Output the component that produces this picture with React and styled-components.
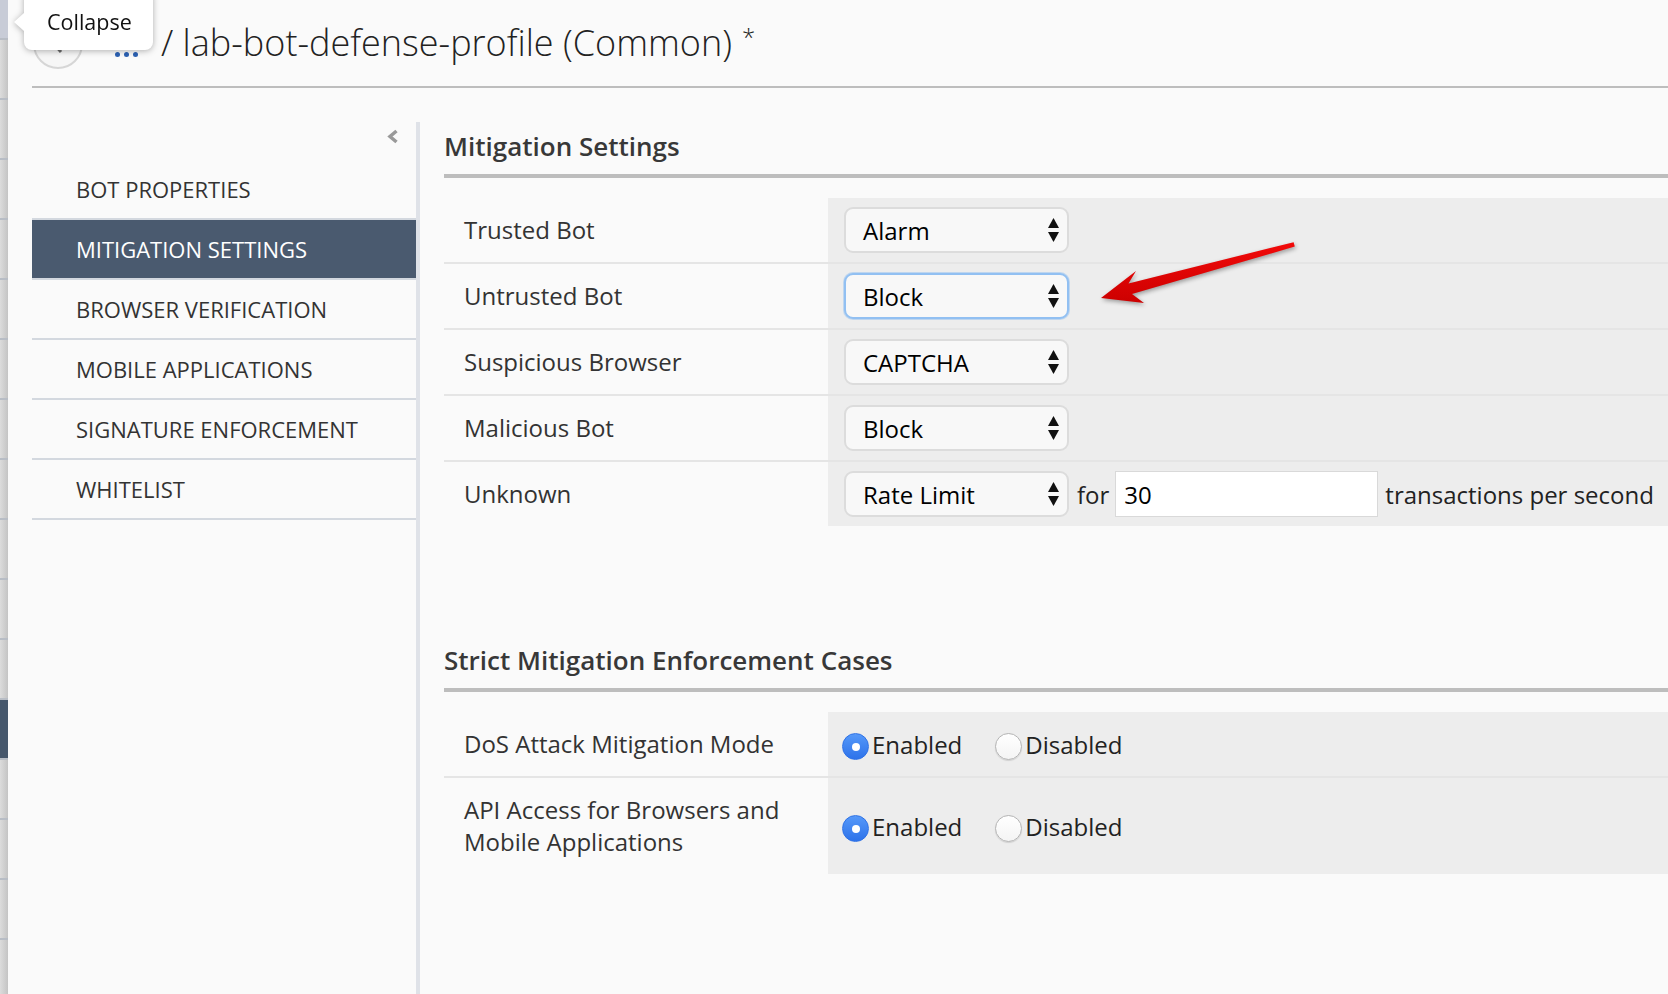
import styled, { createGlobalStyle } from 'styled-components'

const GlobalStyle = createGlobalStyle`
    *, *::before, *::after {
        box-sizing: border-box;
    }
    html, body {
        margin: 0;
        padding: 0;
    }
    body {
        background: #fafafa;
        font-family: 'Open Sans', 'Liberation Sans', sans-serif;
        color: #333;
    }
`

const Page = styled.div`
    position: relative;
    display: flex;
    width: 1668px;
    height: 994px;
    overflow: hidden;
    background: #fafafa;
`
const Rail = styled.div`
    width: 8px;
    flex-shrink: 0;
    display: flex;
    flex-direction: column;
    background: linear-gradient(to right, #dcdcdc, #c4c4c4);
`
const RailItem = styled.div`
    flex-shrink: 0;
    height: ${(props) => (props.first ? '40px' : '60px')};
    border-bottom: 2px solid #b8bdc5;
    background: ${(props) =>
        props.first ? '#c8ccd7' : props.active ? '#46576c' : 'transparent'};
`
const Main = styled.div`
    flex: 1;
    min-width: 0;
    display: flex;
    flex-direction: column;
    padding-left: 24px;
`
const Header = styled.header`
    height: 88px;
    flex-shrink: 0;
    display: flex;
    align-items: flex-start;
    padding-top: 19px;
    border-bottom: 2px solid #bdbdbd;
`
const BackButton = styled.div`
    width: 50px;
    height: 50px;
    margin-left: 1px;
    border-radius: 50%;
    border: 2px solid #d6d6d6;
    background: #f6f6f6;
    display: flex;
    align-items: center;
    justify-content: center;
`
const Dots = styled.div`
    display: flex;
    gap: 4px;
    margin: 33px 0 0 32px;
`
const Dot = styled.span`
    width: 5px;
    height: 5px;
    border-radius: 50%;
    background: #2c61b3;
`
const Title = styled.h1`
    margin: -6px 0 0 23px;
    font-size: 36px;
    font-weight: 300;
    line-height: 48px;
    color: #222;
    white-space: nowrap;
`
const Star = styled.span`
    font-size: 24px;
    margin-left: 10px;
    vertical-align: 10px;
`
const Tooltip = styled.div`
    position: absolute;
    left: 24px;
    top: -10px;
    width: 129px;
    height: 60px;
    padding: 17px 0 0 23px;
    border-radius: 8px;
    background: #fff;
    font-size: 21.5px;
    line-height: 30px;
    color: #111;
    filter: drop-shadow(0 1px 3px rgba(0, 0, 0, 0.3));
    z-index: 10;

    &::before {
        content: '';
        position: absolute;
        left: -10px;
        top: 23px;
        border-right: 10px solid #fff;
        border-top: 9px solid transparent;
        border-bottom: 9px solid transparent;
    }
`
const Body = styled.div`
    flex: 1;
    min-height: 0;
    display: flex;
`
const Sidebar = styled.nav`
    width: 388px;
    flex-shrink: 0;
    margin-top: 34px;
    border-right: 4px solid #dfe2e8;
`
const CollapseRow = styled.div`
    height: 38px;
    display: flex;
    justify-content: flex-end;
    align-items: flex-start;
    padding: 7px 17px 0 0;
`
const NavItem = styled.div`
    height: 60px;
    padding-left: 44px;
    border-bottom: 2px solid #d3d8df;
    font-size: 22px;
    line-height: 58px;
    white-space: nowrap;
    color: ${(props) => (props.active ? '#fff' : '#333')};
    background: ${(props) => (props.active ? '#4a5a6f' : 'transparent')};
`
const Content = styled.main`
    flex: 1;
    min-width: 0;
    padding: 40px 0 0 24px;
`
const Section = styled.section`
    margin-top: ${(props) => props.offset || '0px'};
`
const SectionTitle = styled.h2`
    margin: 0 0 20px;
    padding-bottom: 10px;
    border-bottom: 4px solid #bdbdbd;
    font-size: 26px;
    font-weight: 600;
    line-height: 36px;
    color: #383838;
    white-space: nowrap;
`
const Row = styled.div`
    box-sizing: content-box;
    display: grid;
    grid-template-columns: 384px 1fr;
    min-height: ${(props) => (props.tall ? '96px' : '64px')};

    & + & {
        border-top: 2px solid #e5e5e5;
    }
`
const Label = styled.div`
    display: flex;
    align-items: center;
    padding: 0 24px 0 20px;
    font-size: 24px;
    line-height: 32px;
    color: #333;
`
const Value = styled.div`
    display: flex;
    align-items: center;
    padding-left: ${(props) => props.inset || '16px'};
    background: #ededed;
    font-size: 24px;
    color: #222;
    white-space: nowrap;
`
const SelectBox = styled.div`
    width: 225px;
    height: 46px;
    flex-shrink: 0;
    display: flex;
    align-items: center;
    justify-content: space-between;
    padding: 0 8px 0 17px;
    border-radius: 9px;
    border: 2px solid ${(props) => (props.focused ? '#92c0f2' : '#dcdcdc')};
    box-shadow: ${(props) =>
        props.focused ? '0 0 0 1px rgba(146, 192, 242, 0.5)' : 'none'};
    background: #f8f8f8;
    font-size: 24px;
    color: #000;
`
const Connector = styled.span`
    margin: 0 6px 0 8px;
`
const NumberInput = styled.input`
    width: 263px;
    height: 46px;
    margin-right: 7px;
    padding: 0 8px;
    border: 1px solid #d9d9d9;
    background: #fff;
    font-family: inherit;
    font-size: 24px;
    color: #000;
    outline: none;
`
const RadioOption = styled.label`
    display: flex;
    align-items: center;
    margin-left: ${(props) => (props.second ? '33px' : '0')};
    color: #222;
`
const RadioMark = styled.span`
    width: 27px;
    height: 27px;
    margin: 5px 3px 0 0;
    border-radius: 50%;
    display: flex;
    align-items: center;
    justify-content: center;
    border: 1px solid ${(props) => (props.checked ? '#2f72e6' : '#b4b4b4')};
    background: ${(props) =>
        props.checked
            ? 'linear-gradient(#5598f9, #2e73ea)'
            : 'linear-gradient(#ffffff, #f4f4f4)'};
    box-shadow: ${(props) =>
        props.checked ? 'none' : '0 1px 1px rgba(0, 0, 0, 0.12)'};

    &::after {
        content: '';
        display: ${(props) => (props.checked ? 'block' : 'none')};
        width: 8px;
        height: 8px;
        border-radius: 50%;
        background: #fff;
    }
`
const Pointer = styled.svg`
    position: absolute;
    left: 1090px;
    top: 235px;
    filter: drop-shadow(1px 2px 2px rgba(0, 0, 0, 0.35));
`

const railItems = Array.from({ length: 17 }, (_, i) => i)

const navItems = [
    'BOT PROPERTIES',
    'MITIGATION SETTINGS',
    'BROWSER VERIFICATION',
    'MOBILE APPLICATIONS',
    'SIGNATURE ENFORCEMENT',
    'WHITELIST',
]

const mitigations = [
    { label: 'Trusted Bot', value: 'Alarm' },
    { label: 'Untrusted Bot', value: 'Block', focused: true },
    { label: 'Suspicious Browser', value: 'CAPTCHA' },
    { label: 'Malicious Bot', value: 'Block' },
]

const strictCases = [
    { label: 'DoS Attack Mitigation Mode' },
    { label: 'API Access for Browsers and Mobile Applications', tall: true },
]

function UpDown() {
    return (
        <svg width="11" height="24" viewBox="0 0 11 24">
            <polygon points="0,10 5.5,0 11,10" fill="#111" />
            <polygon points="0,14 5.5,24 11,14" fill="#111" />
        </svg>
    )
}

function Select({ value, focused }) {
    return (
        <SelectBox focused={focused}>
            <span>{value}</span>
            <UpDown />
        </SelectBox>
    )
}

function RadioPair() {
    return (
        <>
            <RadioOption>
                <RadioMark checked />
                Enabled
            </RadioOption>
            <RadioOption second>
                <RadioMark />
                Disabled
            </RadioOption>
        </>
    )
}

function App() {
    return (
        <Page>
            <GlobalStyle />
            <Rail>
                {railItems.map((i) => (
                    <RailItem key={i} first={i === 0} active={i === 12} />
                ))}
            </Rail>
            <Main>
                <Header>
                    <BackButton>
                        <svg width="14" height="20" viewBox="0 0 14 20">
                            <polyline
                                points="10,2 3,10 10,18"
                                fill="none"
                                stroke="#6b6b6b"
                                strokeWidth="3"
                            />
                        </svg>
                    </BackButton>
                    <Dots>
                        <Dot />
                        <Dot />
                        <Dot />
                    </Dots>
                    <Title>
                        / lab-bot-defense-profile (Common)
                        <Star>*</Star>
                    </Title>
                </Header>
                <Body>
                    <Sidebar>
                        <CollapseRow>
                            <svg width="12" height="15" viewBox="0 0 12 15">
                                <polyline
                                    points="9.5,2 3,7.5 9.5,13"
                                    fill="none"
                                    stroke="#999"
                                    strokeWidth="3.5"
                                />
                            </svg>
                        </CollapseRow>
                        {navItems.map((item) => (
                            <NavItem
                                key={item}
                                active={item === 'MITIGATION SETTINGS'}
                            >
                                {item}
                            </NavItem>
                        ))}
                    </Sidebar>
                    <Content>
                        <Section>
                            <SectionTitle>Mitigation Settings</SectionTitle>
                            {mitigations.map((row) => (
                                <Row key={row.label}>
                                    <Label>{row.label}</Label>
                                    <Value>
                                        <Select
                                            value={row.value}
                                            focused={row.focused}
                                        />
                                    </Value>
                                </Row>
                            ))}
                            <Row>
                                <Label>Unknown</Label>
                                <Value>
                                    <Select value="Rate Limit" />
                                    <Connector>for</Connector>
                                    <NumberInput value="30" readOnly />
                                    <span>transactions per second</span>
                                </Value>
                            </Row>
                        </Section>
                        <Section offset="116px">
                            <SectionTitle>
                                Strict Mitigation Enforcement Cases
                            </SectionTitle>
                            {strictCases.map((row) => (
                                <Row key={row.label} tall={row.tall}>
                                    <Label>{row.label}</Label>
                                    <Value inset="14px">
                                        <RadioPair />
                                    </Value>
                                </Row>
                            ))}
                        </Section>
                    </Content>
                </Body>
            </Main>
            <Tooltip>Collapse</Tooltip>
            <Pointer width="215" height="80" viewBox="0 0 215 80">
                <defs>
                    <linearGradient id="red" x1="0" y1="0" x2="0" y2="1">
                        <stop offset="0" stopColor="#f20a0a" />
                        <stop offset="1" stopColor="#cc0000" />
                    </linearGradient>
                </defs>
                <polygon
                    points="11,63 54,68 42,59 204.8,11.6 203.6,7.2 38.5,48.5 46,36"
                    fill="url(#red)"
                />
            </Pointer>
        </Page>
    )
}

export default App
